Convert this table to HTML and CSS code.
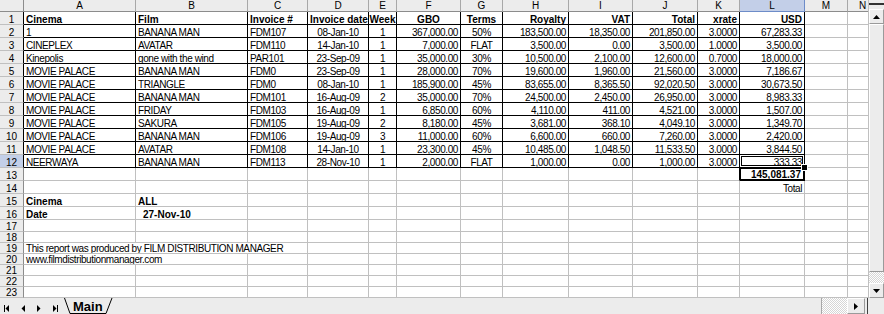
FILE: index.html
```html
<!DOCTYPE html>
<html>
<head>
<meta charset="utf-8">
<link rel="stylesheet" href="styles.css">
</head>
<body>
<div class="app">
  <div class="top">
    <div class="sheet">
      <div class="hc"></div>
      <div class="h">A</div><div class="h">B</div><div class="h">C</div><div class="h">D</div><div class="h">E</div><div class="h">F</div><div class="h">G</div><div class="h">H</div><div class="h">I</div><div class="h">J</div><div class="h">K</div><div class="h hsel">L</div><div class="h">M</div><div class="h hn">N</div>

      <div class="rh rhb">1</div>
      <div class="c b bd">Cinema</div><div class="c b bd">Film</div><div class="c b bd">Invoice #</div><div class="c b bd">Invoice date</div><div class="c b bd m">Week</div><div class="c b bd m">GBO</div><div class="c b bd m">Terms</div><div class="c b bd r">Royalty</div><div class="c b bd r">VAT</div><div class="c b bd r">Total</div><div class="c b bd r">xrate</div><div class="c b bd r">USD</div><div class="c"></div><div class="c n"></div>

      <div class="rh rhb">2</div>
      <div class="c b">1</div><div class="c b">BANANA MAN</div><div class="c b">FDM107</div><div class="c b m">08-Jan-10</div><div class="c b m">1</div><div class="c b r">367,000.00</div><div class="c b m">50%</div><div class="c b r">183,500.00</div><div class="c b r">18,350.00</div><div class="c b r">201,850.00</div><div class="c b r">3.0000</div><div class="c b r">67,283.33</div><div class="c"></div><div class="c n"></div>

      <div class="rh rhb">3</div>
      <div class="c b">CINEPLEX</div><div class="c b">AVATAR</div><div class="c b">FDM110</div><div class="c b m">14-Jan-10</div><div class="c b m">1</div><div class="c b r">7,000.00</div><div class="c b m">FLAT</div><div class="c b r">3,500.00</div><div class="c b r">0.00</div><div class="c b r">3,500.00</div><div class="c b r">1.0000</div><div class="c b r">3,500.00</div><div class="c"></div><div class="c n"></div>

      <div class="rh rhb">4</div>
      <div class="c b">Kinepolis</div><div class="c b">gone with the wind</div><div class="c b">PAR101</div><div class="c b m">23-Sep-09</div><div class="c b m">1</div><div class="c b r">35,000.00</div><div class="c b m">30%</div><div class="c b r">10,500.00</div><div class="c b r">2,100.00</div><div class="c b r">12,600.00</div><div class="c b r">0.7000</div><div class="c b r">18,000.00</div><div class="c"></div><div class="c n"></div>

      <div class="rh rhb">5</div>
      <div class="c b">MOVIE PALACE</div><div class="c b">BANANA MAN</div><div class="c b">FDM0</div><div class="c b m">23-Sep-09</div><div class="c b m">1</div><div class="c b r">28,000.00</div><div class="c b m">70%</div><div class="c b r">19,600.00</div><div class="c b r">1,960.00</div><div class="c b r">21,560.00</div><div class="c b r">3.0000</div><div class="c b r">7,186.67</div><div class="c"></div><div class="c n"></div>

      <div class="rh rhb">6</div>
      <div class="c b">MOVIE PALACE</div><div class="c b">TRIANGLE</div><div class="c b">FDM0</div><div class="c b m">08-Jan-10</div><div class="c b m">1</div><div class="c b r">185,900.00</div><div class="c b m">45%</div><div class="c b r">83,655.00</div><div class="c b r">8,365.50</div><div class="c b r">92,020.50</div><div class="c b r">3.0000</div><div class="c b r">30,673.50</div><div class="c"></div><div class="c n"></div>

      <div class="rh rhb">7</div>
      <div class="c b">MOVIE PALACE</div><div class="c b">BANANA MAN</div><div class="c b">FDM101</div><div class="c b m">16-Aug-09</div><div class="c b m">2</div><div class="c b r">35,000.00</div><div class="c b m">70%</div><div class="c b r">24,500.00</div><div class="c b r">2,450.00</div><div class="c b r">26,950.00</div><div class="c b r">3.0000</div><div class="c b r">8,983.33</div><div class="c"></div><div class="c n"></div>

      <div class="rh rhb">8</div>
      <div class="c b">MOVIE PALACE</div><div class="c b">FRIDAY</div><div class="c b">FDM103</div><div class="c b m">16-Aug-09</div><div class="c b m">1</div><div class="c b r">6,850.00</div><div class="c b m">60%</div><div class="c b r">4,110.00</div><div class="c b r">411.00</div><div class="c b r">4,521.00</div><div class="c b r">3.0000</div><div class="c b r">1,507.00</div><div class="c"></div><div class="c n"></div>

      <div class="rh rhb">9</div>
      <div class="c b">MOVIE PALACE</div><div class="c b">SAKURA</div><div class="c b">FDM105</div><div class="c b m">19-Aug-09</div><div class="c b m">2</div><div class="c b r">8,180.00</div><div class="c b m">45%</div><div class="c b r">3,681.00</div><div class="c b r">368.10</div><div class="c b r">4,049.10</div><div class="c b r">3.0000</div><div class="c b r">1,349.70</div><div class="c"></div><div class="c n"></div>

      <div class="rh rhb">10</div>
      <div class="c b">MOVIE PALACE</div><div class="c b">BANANA MAN</div><div class="c b">FDM106</div><div class="c b m">19-Aug-09</div><div class="c b m">3</div><div class="c b r">11,000.00</div><div class="c b m">60%</div><div class="c b r">6,600.00</div><div class="c b r">660.00</div><div class="c b r">7,260.00</div><div class="c b r">3.0000</div><div class="c b r">2,420.00</div><div class="c"></div><div class="c n"></div>

      <div class="rh rhb">11</div>
      <div class="c b">MOVIE PALACE</div><div class="c b">AVATAR</div><div class="c b">FDM108</div><div class="c b m">14-Jan-10</div><div class="c b m">1</div><div class="c b r">23,300.00</div><div class="c b m">45%</div><div class="c b r">10,485.00</div><div class="c b r">1,048.50</div><div class="c b r">11,533.50</div><div class="c b r">3.0000</div><div class="c b r">3,844.50</div><div class="c"></div><div class="c n"></div>

      <div class="rh rhb rsel">12</div>
      <div class="c b">NEERWAYA</div><div class="c b">BANANA MAN</div><div class="c b">FDM113</div><div class="c b m">28-Nov-10</div><div class="c b m">1</div><div class="c b r">2,000.00</div><div class="c b m">FLAT</div><div class="c b r">1,000.00</div><div class="c b r">0.00</div><div class="c b r">1,000.00</div><div class="c b r">3.0000</div><div class="c b r sel">333.33</div><div class="c"></div><div class="c n"></div>

      <div class="rh">13</div>
      <div class="c"></div><div class="c"></div><div class="c"></div><div class="c"></div><div class="c"></div><div class="c"></div><div class="c"></div><div class="c"></div><div class="c"></div><div class="c"></div><div class="c kb"></div><div class="c r bd tot">145,081.37</div><div class="c"></div><div class="c n"></div>

      <div class="rh">14</div>
      <div class="c"></div><div class="c"></div><div class="c"></div><div class="c"></div><div class="c"></div><div class="c"></div><div class="c"></div><div class="c"></div><div class="c"></div><div class="c"></div><div class="c"></div><div class="c r">Total</div><div class="c"></div><div class="c n"></div>

      <div class="rh">15</div>
      <div class="c bd">Cinema</div><div class="c bd">ALL</div><div class="c"></div><div class="c"></div><div class="c"></div><div class="c"></div><div class="c"></div><div class="c"></div><div class="c"></div><div class="c"></div><div class="c"></div><div class="c"></div><div class="c"></div><div class="c n"></div>

      <div class="rh">16</div>
      <div class="c bd">Date</div><div class="c bd ind">27-Nov-10</div><div class="c"></div><div class="c"></div><div class="c"></div><div class="c"></div><div class="c"></div><div class="c"></div><div class="c"></div><div class="c"></div><div class="c"></div><div class="c"></div><div class="c"></div><div class="c n"></div>

      <div class="rh">17</div>
      <div class="c"></div><div class="c"></div><div class="c"></div><div class="c"></div><div class="c"></div><div class="c"></div><div class="c"></div><div class="c"></div><div class="c"></div><div class="c"></div><div class="c"></div><div class="c"></div><div class="c"></div><div class="c n"></div>

      <div class="rh">18</div>
      <div class="c"></div><div class="c"></div><div class="c"></div><div class="c"></div><div class="c"></div><div class="c"></div><div class="c"></div><div class="c"></div><div class="c"></div><div class="c"></div><div class="c"></div><div class="c"></div><div class="c"></div><div class="c n"></div>

      <div class="rh">19</div>
      <div class="c span3">This report was produced by FILM DISTRIBUTION MANAGER</div><div class="c"></div><div class="c"></div><div class="c"></div><div class="c"></div><div class="c"></div><div class="c"></div><div class="c"></div><div class="c"></div><div class="c"></div><div class="c"></div><div class="c n"></div>

      <div class="rh">20</div>
      <div class="c span2">www.filmdistributionmanager.com</div><div class="c"></div><div class="c"></div><div class="c"></div><div class="c"></div><div class="c"></div><div class="c"></div><div class="c"></div><div class="c"></div><div class="c"></div><div class="c"></div><div class="c"></div><div class="c n"></div>

      <div class="rh">21</div>
      <div class="c"></div><div class="c"></div><div class="c"></div><div class="c"></div><div class="c"></div><div class="c"></div><div class="c"></div><div class="c"></div><div class="c"></div><div class="c"></div><div class="c"></div><div class="c"></div><div class="c"></div><div class="c n"></div>

      <div class="rh">22</div>
      <div class="c"></div><div class="c"></div><div class="c"></div><div class="c"></div><div class="c"></div><div class="c"></div><div class="c"></div><div class="c"></div><div class="c"></div><div class="c"></div><div class="c"></div><div class="c"></div><div class="c"></div><div class="c n"></div>

      <div class="rh">23</div>
      <div class="c"></div><div class="c"></div><div class="c"></div><div class="c"></div><div class="c"></div><div class="c"></div><div class="c"></div><div class="c"></div><div class="c"></div><div class="c"></div><div class="c"></div><div class="c"></div><div class="c"></div><div class="c n"></div>
    </div>
    <div class="vscroll">
      <div class="split"></div>
      <div class="btn vbtn-up"><svg width="7" height="4" viewBox="0 0 7 4"><polygon points="3.5,0 7,4 0,4" fill="#000"/></svg></div>
      <div class="thumb"></div>
      <div class="dither"></div>
      <div class="btn vbtn-down"><svg width="7" height="4" viewBox="0 0 7 4"><polygon points="0,0 7,0 3.5,4" fill="#000"/></svg></div>
    </div>
  </div>
  <div class="bar">
    <div class="nav">
      <svg width="62" height="16" viewBox="0 0 62 16">
        <rect x="4" y="7" width="1" height="7" fill="#000"/>
        <polygon points="9,7 9,14 5.5,10.5" fill="#000"/>
        <polygon points="25,7 25,14 21.5,10.5" fill="#000"/>
        <polygon points="37,7 37,14 40.5,10.5" fill="#000"/>
        <polygon points="53,7 53,14 56.5,10.5" fill="#000"/>
        <rect x="57" y="7" width="1" height="7" fill="#000"/>
      </svg>
    </div>
    <div class="tab">
      <svg class="tabshape" width="52" height="16" viewBox="0 0 52 16"><polyline points="2.5,0 8,15.5 44,15.5 50,0" fill="none" stroke="#000" stroke-width="1"/></svg>
      <span class="tabtext">Main</span>
    </div>
    <div class="hscroll"></div>
    <div class="hdither"></div>
    <div class="btn hbtn"><svg width="4" height="7" viewBox="0 0 4 7"><polygon points="0,0 4,3.5 0,7" fill="#000"/></svg></div>
    <div class="hgap"></div>
    <div class="hcorner"></div>
  </div>
</div>
</body>
</html>
```

FILE: styles.css
```css
html, body {
  margin: 0;
  padding: 0;
  background: #fff;
}
body {
  width: 884px;
  height: 314px;
  overflow: hidden;
  font-family: "Liberation Sans", Arial, sans-serif;
  font-size: 10px;
  color: #000;
}
.app {
  display: flex;
  flex-direction: column;
  width: 884px;
  height: 314px;
}
.top {
  display: flex;
  height: 298px;
}
.sheet {
  display: grid;
  grid-template-columns: 24px 112px 112px 60px 61px 28px 64px 42px 66px 64px 65px 42px 65px 43px 20px;
  grid-template-rows: 12px repeat(16, 13px) 12px repeat(6, 11px);
  width: 868px;
  height: 298px;
}
.hc, .h, .rh, .c {
  box-sizing: border-box;
  display: flex;
  align-items: flex-end;
  white-space: nowrap;
  line-height: 9px;
  min-width: 0;
}
.hc {
  background: #ececec;
  border-right: 1px solid #8c8c8c;
  border-bottom: 1px solid #8c8c8c;
}
.h {
  background: #ececec;
  border-right: 1px solid #a8a8a8;
  border-bottom: 1px solid #8c8c8c;
  justify-content: center;
  padding-bottom: 1px;
}
.h.hsel {
  background: #c3cfe8;
  border-right-color: #6d8cc8;
  border-bottom-color: #6d8cc8;
}
.h.hn {
  justify-content: flex-start;
  padding-left: 11px;
  border-right: none;
  overflow: hidden;
}
.rh {
  background: #ececec;
  border-right: 1px solid #8c8c8c;
  border-bottom: 1px solid #c0c0c0;
  justify-content: center;
}
.rh.rhb {
  border-right-color: #000;
}
.rh.rsel {
  background: #c3cfe8;
}
.c {
  border-right: 1px solid #c0c0c0;
  border-bottom: 1px solid #c0c0c0;
  padding: 0 2px;
  overflow: hidden;
  letter-spacing: -0.4px;
}
.c.n {
  border-right: none;
}
.c.b {
  border-right-color: #000;
  border-bottom-color: #000;
}
.c.bd {
  font-weight: bold;
  letter-spacing: 0;
}
.c.r {
  justify-content: flex-end;
}
.c.m {
  justify-content: center;
}
.c.ind {
  padding-left: 7px;
}
.c.kb {
  border-right-color: #000;
}
.c.tot {
  border-right: 2px solid #000;
  border-bottom: 2px solid #000;
  box-shadow: inset 1px 1px 0 #000;
}
.c.sel {
  position: relative;
  overflow: visible;
}
.c.sel::after {
  content: "";
  position: absolute;
  left: -1px;
  top: -1px;
  right: -1px;
  bottom: -1px;
  border: 1px solid #000;
  box-shadow: inset 0 0 0 1px #fff, inset 0 0 0 2px #000;
}
.c.sel::before {
  content: "";
  position: absolute;
  right: -4px;
  bottom: -4px;
  width: 5px;
  height: 5px;
  background: #000;
  border: 1px solid #fff;
  z-index: 2;
}
.span3 {
  grid-column: span 3;
}
.span2 {
  grid-column: span 2;
}

/* vertical scrollbar */
.vscroll {
  box-sizing: border-box;
  width: 16px;
  height: 298px;
  border-left: 1px solid #c0c0c0;
  display: flex;
  flex-direction: column;
  background: #ececec;
}
.split {
  height: 9px;
  background: linear-gradient(#ececec 3px, #333 3px, #333 5px, #ececec 5px);
}
.btn {
  box-sizing: border-box;
  display: flex;
  align-items: center;
  justify-content: center;
  background: #ececec;
  border-top: 1px solid #fff;
  border-left: 1px solid #fff;
  border-right: 1px solid #9a9a9a;
  border-bottom: 1px solid #9a9a9a;
}
.btn svg {
  display: block;
}
.vbtn-up {
  height: 15px;
}
.vbtn-down {
  height: 15px;
}
.thumb {
  box-sizing: border-box;
  height: 248px;
  background: #ececec;
  border-top: 1px solid #fff;
  border-left: 1px solid #fff;
  border-right: 1px solid #9a9a9a;
  border-bottom: 1px solid #9a9a9a;
}
.dither {
  height: 11px;
  background: repeating-conic-gradient(#ffffff 0 25%, #d6d6d6 0 50%) 0 0 / 2px 2px;
}

/* bottom bar */
.bar {
  display: flex;
  height: 16px;
  background: #ececec;
}
.nav {
  width: 62px;
  height: 16px;
}
.nav svg {
  display: block;
}
.tab {
  position: relative;
  width: 52px;
  height: 16px;
  box-sizing: border-box;
  padding: 2px 0 0 11px;
}
.tabshape {
  position: absolute;
  left: 0;
  top: 0;
}
.tabtext {
  position: relative;
  display: block;
  font-size: 13px;
  font-weight: bold;
  line-height: 14px;
}
.hscroll {
  flex: 1;
  border-right: 1px solid #a8a8a8;
}
.hdither {
  width: 25px;
  background: repeating-conic-gradient(#ffffff 0 25%, #d6d6d6 0 50%) 0 0 / 2px 2px;
}
.hbtn {
  width: 18px;
  height: 16px;
}
.hgap {
  width: 2px;
}
.hcorner {
  width: 16px;
  border-left: 1px solid #404040;
}
```
